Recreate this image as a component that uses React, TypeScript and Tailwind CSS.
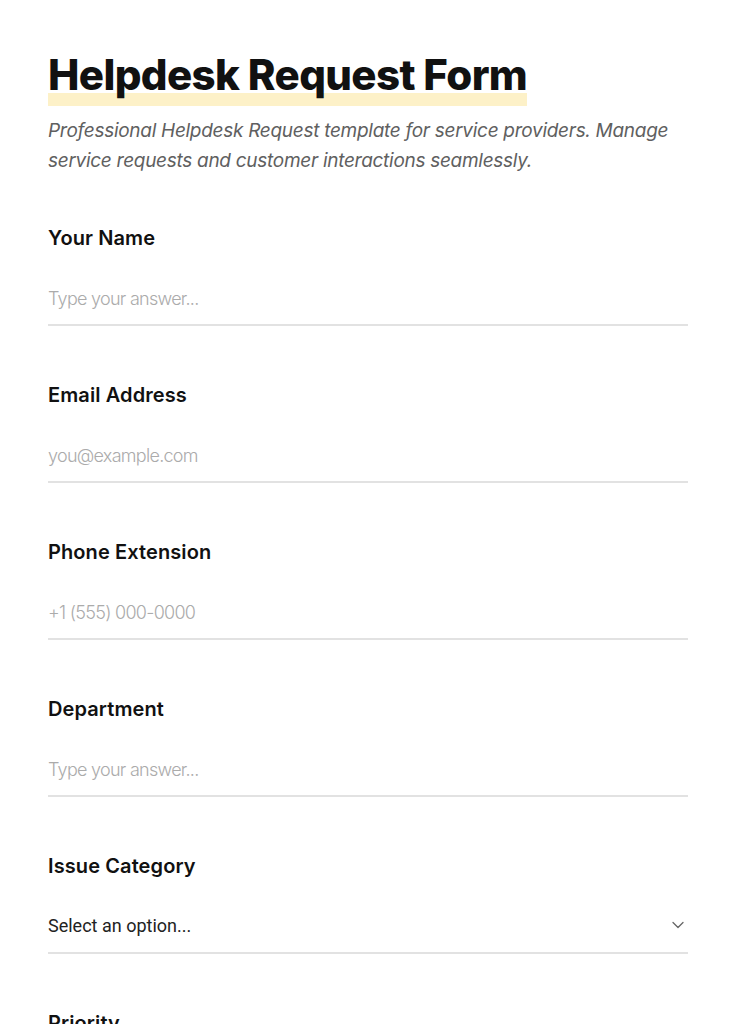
const fields = [
  { label: "Your Name", placeholder: "Type your answer..." },
  { label: "Email Address", placeholder: "you@example.com" },
  { label: "Phone Extension", placeholder: "+1 (555) 000-0000" },
  { label: "Department", placeholder: "Type your answer..." },
];

const Chevron = () => (
  <svg width="14" height="14" viewBox="0 0 14 14" fill="none" className="text-[#666]">
    <path d="M2 4.5 7 9.5 12 4.5" stroke="currentColor" strokeWidth="1.3" strokeLinecap="round" strokeLinejoin="round" />
  </svg>
);

const SelectField = ({ label }: { label: string }) => (
  <div className="flex flex-col">
    <label className="text-[20px] leading-[28px] font-semibold tracking-[0.005em] text-[#111]">
      {label}
    </label>
    <div className="mt-[22px] flex h-[52px] w-full items-center justify-between border-b-2 border-[#e2e2e2] pb-[4px]">
      <span className="font-['Roboto',sans-serif] text-[18px] tracking-[0em] text-[#222]">
        Select an option...
      </span>
      <span className="pr-[3px]">
        <Chevron />
      </span>
    </div>
  </div>
);

const App = () => {
  return (
    <div className="min-h-screen bg-white font-['Inter',sans-serif] text-[#111]">
      <div className="px-12 pt-[49px]">
        <div className="flex">
          <h1 className="inline-block pb-[5px] text-[42px] leading-[52px] font-extrabold tracking-[-0.015em] bg-[linear-gradient(to_bottom,transparent_44px,#fdf1c8_44px)]">
            Helpdesk Request Form
          </h1>
        </div>
        <p className="mt-[10px] text-[19px] leading-[30px] italic text-[#606060] tracking-[-0.015em]">
          Professional Helpdesk Request template for service providers. Manage service requests and customer interactions seamlessly.
        </p>

        <form className="mt-[48px] flex flex-col gap-[55px]">
          {fields.map((f) => (
            <div key={f.label} className="flex flex-col">
              <label className="text-[20px] leading-[28px] font-semibold tracking-[0.005em] text-[#111]">
                {f.label}
              </label>
              <input
                type="text"
                placeholder={f.placeholder}
                className="mt-[22px] h-[52px] w-full border-b-2 border-[#e2e2e2] bg-transparent pb-[2px] text-[18px] font-light tracking-[-0.04em] text-[#222] outline-none placeholder:text-[#ababab]"
              />
            </div>
          ))}
          <SelectField label="Issue Category" />
          <SelectField label="Priority" />
        </form>
      </div>
    </div>
  );
};

export default App;
